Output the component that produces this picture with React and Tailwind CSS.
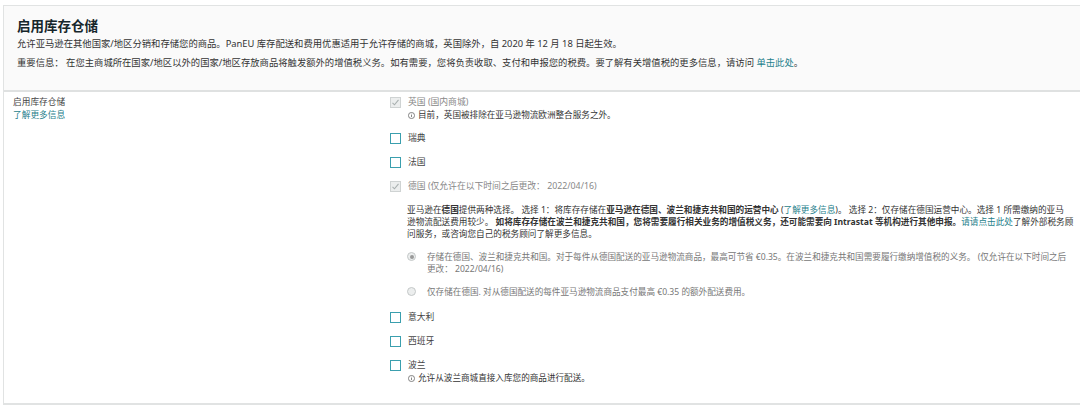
const stack = 'font-["Noto_Sans","Noto_Sans_CJK_SC",sans-serif]';

function InfoIcon() {
  return (
    <svg width="7" height="7" viewBox="0 0 8 8" fill="none" stroke="#555" strokeWidth="0.8" className="shrink-0">
      <circle cx="4" cy="4" r="3.5" />
      <path d="M4 3.4v2.4M4 2v.8" />
    </svg>
  );
}

function Checkbox({ checked }) {
  if (checked) {
    return (
      <span className="flex h-[11px] w-[11px] shrink-0 items-center justify-center border border-[#cfd3d3] bg-[#eceeee]">
        <svg width="9" height="9" viewBox="0 0 9 9" fill="none" stroke="#a9b0b0" strokeWidth="1.1">
          <path d="M1.5 4.8l2 2 4-5" />
        </svg>
      </span>
    );
  }
  return <span className="block h-[11px] w-[11px] shrink-0 border border-[#3b9fae] bg-white" />;
}

function CountryRow({ label, note, checked, className = '' }) {
  return (
    <div className={`flex items-start gap-[7px] ${className}`}>
      <div className="shrink-0 pt-[1px]">
        <Checkbox checked={checked} />
      </div>
      <div className="min-w-0">
        <p className={`text-[8.8px] leading-[13px] ${checked ? 'text-[#888]' : 'text-[#444]'}`}>{label}</p>
        {note && (
          <p className="flex items-center gap-[3px] text-[8.6px] leading-[12px] text-[#333]">
            <InfoIcon />
            {note}
          </p>
        )}
      </div>
    </div>
  );
}

function Radio({ selected, children, className = '' }) {
  return (
    <div className={`flex items-start gap-[11px] ${className}`}>
      <span className="mt-[1px] flex h-[9px] w-[9px] shrink-0 items-center justify-center rounded-full border border-[#c4c8c8] bg-[#eceeee]">
        {selected && <span className="h-[4px] w-[4px] rounded-full bg-[#999]" />}
      </span>
      <p className="w-[644px] text-[8.6px] leading-[12px] text-[#777]">{children}</p>
    </div>
  );
}

export default function App() {
  return (
    <div className={`h-[405px] w-[1080px] overflow-hidden bg-white ${stack}`}>
      <div className="ml-[3px] mt-[5px] h-[400px] border-b-2 border-l border-t border-[#e1e3e3]">
        <div className="h-[86px] border-b-2 border-[#dfe1e1] bg-[#fafafa] px-[13px] pt-[10px]">
          <h1 className="text-[13.5px] font-bold leading-[20px] text-[#16262b]">启用库存仓储</h1>
          <p className="mt-[1px] text-[9.33px] leading-[13px] text-[#333]">
            允许亚马逊在其他国家/地区分销和存储您的商品。PanEU 库存配送和费用优惠适用于允许存储的商城，英国除外，自 2020 年 12 月 18 日起生效。
          </p>
          <p className="mt-[6px] text-[9.33px] leading-[13px] text-[#333]">
            重要信息： 在您主商城所在国家/地区以外的国家/地区存放商品将触发额外的增值税义务。如有需要，您将负责收取、支付和申报您的税费。要了解有关增值税的更多信息，请访问 <span className="text-[#1f7f8c]">单击此处</span>。
          </p>
        </div>
        <div className="flex pt-[4px]">
          <div className="w-[386px] pl-[9px]">
            <p className="text-[8.7px] leading-[13px] text-[#444]">启用库存仓储</p>
            <p className="text-[8.7px] leading-[13px] text-[#1f7f8c]">了解更多信息</p>
          </div>
          <div className="w-[686px]">
            <CountryRow checked label="英国 (国内商城)" note="目前，英国被排除在亚马逊物流欧洲整合服务之外。" />
            <CountryRow label="瑞典" className="mt-[11px]" />
            <CountryRow label="法国" className="mt-[11px]" />
            <CountryRow checked label="德国 (仅允许在以下时间之后更改： 2022/04/16)" className="mt-[11px]" />
            <div className="mt-[11px] pl-[17px]">
              <p className="w-[669px] text-[8.65px] leading-[12px] text-[#333]">
                亚马逊在<b>德国</b>提供两种选择。 选择 1：将库存存储在<b>亚马逊在德国、波兰和捷克共和国的运营中心</b> (<span className="text-[#1f7f8c]">了解更多信息</span>)。 选择 2：仅存储在德国运营中心。选择 1 所需缴纳的亚马<br />逊物流配送费用较少。 <b>如将库存存储在波兰和捷克共和国，您将需要履行相关业务的增值税义务，还可能需要向 Intrastat 等机构进行其他申报。</b><span className="text-[#1f7f8c]">请请点击此处</span>了解外部税务顾<br />问服务，或咨询您自己的税务顾问了解更多信息。
              </p>
              <Radio selected className="mt-[11px]">
                存储在德国、波兰和捷克共和国。对于每件从德国配送的亚马逊物流商品，最高可节省 €0.35。在波兰和捷克共和国需要履行缴纳增值税的义务。 (仅允许在以下时间之后更改： 2022/04/16)
              </Radio>
              <Radio className="mt-[11px]">
                仅存储在德国. 对从德国配送的每件亚马逊物流商品支付最高 €0.35 的额外配送费用。
              </Radio>
            </div>
            <CountryRow label="意大利" className="mt-[13px]" />
            <CountryRow label="西班牙" className="mt-[11px]" />
            <CountryRow label="波兰" note="允许从波兰商城直接入库您的商品进行配送。" className="mt-[11px]" />
          </div>
        </div>
      </div>
    </div>
  );
}
